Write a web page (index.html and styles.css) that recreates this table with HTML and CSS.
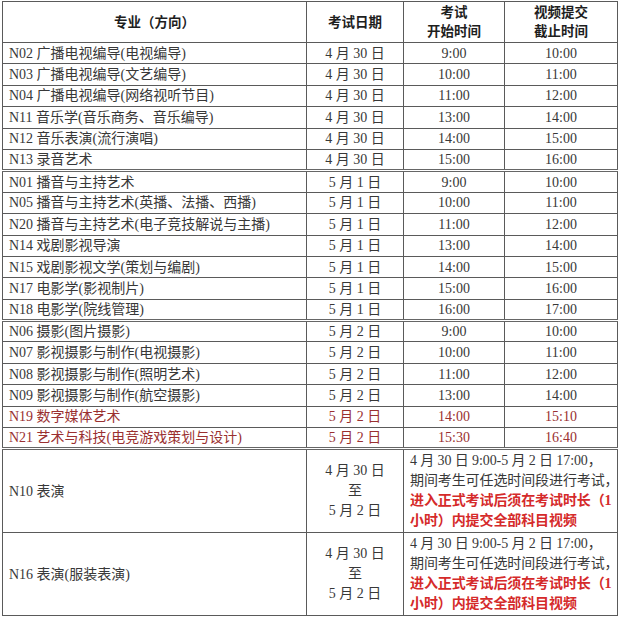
FILE: index.html
```html
<!DOCTYPE html>
<html lang="zh-CN">
<head>
<meta charset="utf-8">
<title>考试时间安排</title>
<link rel="stylesheet" href="styles.css">
</head>
<body>
<table class="sched">
  <colgroup>
    <col class="c-major">
    <col class="c-date">
    <col class="c-start">
    <col class="c-end">
  </colgroup>
  <thead>
    <tr class="head">
      <th>专业（方向）</th>
      <th>考试日期</th>
      <th>考试<br>开始时间</th>
      <th>视频提交<br>截止时间</th>
    </tr>
  </thead>
  <tbody>
    <tr><td class="major">N02 广播电视编导(电视编导)</td><td>4 月 30 日</td><td>9:00</td><td>10:00</td></tr>
    <tr><td class="major">N03 广播电视编导(文艺编导)</td><td>4 月 30 日</td><td>10:00</td><td>11:00</td></tr>
    <tr><td class="major">N04 广播电视编导(网络视听节目)</td><td>4 月 30 日</td><td>11:00</td><td>12:00</td></tr>
    <tr><td class="major">N11 音乐学(音乐商务、音乐编导)</td><td>4 月 30 日</td><td>13:00</td><td>14:00</td></tr>
    <tr><td class="major">N12 音乐表演(流行演唱)</td><td>4 月 30 日</td><td>14:00</td><td>15:00</td></tr>
    <tr><td class="major">N13 录音艺术</td><td>4 月 30 日</td><td>15:00</td><td>16:00</td></tr>

    <tr class="sep"><td class="major">N01 播音与主持艺术</td><td>5 月 1 日</td><td>9:00</td><td>10:00</td></tr>
    <tr><td class="major">N05 播音与主持艺术(英播、法播、西播)</td><td>5 月 1 日</td><td>10:00</td><td>11:00</td></tr>
    <tr><td class="major">N20 播音与主持艺术(电子竞技解说与主播)</td><td>5 月 1 日</td><td>11:00</td><td>12:00</td></tr>
    <tr><td class="major">N14 戏剧影视导演</td><td>5 月 1 日</td><td>13:00</td><td>14:00</td></tr>
    <tr><td class="major">N15 戏剧影视文学(策划与编剧)</td><td>5 月 1 日</td><td>14:00</td><td>15:00</td></tr>
    <tr><td class="major">N17 电影学(影视制片)</td><td>5 月 1 日</td><td>15:00</td><td>16:00</td></tr>
    <tr><td class="major">N18 电影学(院线管理)</td><td>5 月 1 日</td><td>16:00</td><td>17:00</td></tr>

    <tr class="sep"><td class="major">N06 摄影(图片摄影)</td><td>5 月 2 日</td><td>9:00</td><td>10:00</td></tr>
    <tr><td class="major">N07 影视摄影与制作(电视摄影)</td><td>5 月 2 日</td><td>10:00</td><td>11:00</td></tr>
    <tr><td class="major">N08 影视摄影与制作(照明艺术)</td><td>5 月 2 日</td><td>11:00</td><td>12:00</td></tr>
    <tr><td class="major">N09 影视摄影与制作(航空摄影)</td><td>5 月 2 日</td><td>13:00</td><td>14:00</td></tr>
    <tr class="red"><td class="major">N19 数字媒体艺术</td><td>5 月 2 日</td><td>14:00</td><td>15:10</td></tr>
    <tr class="red"><td class="major">N21 艺术与科技(电竞游戏策划与设计)</td><td>5 月 2 日</td><td>15:30</td><td>16:40</td></tr>

    <tr class="sep tall">
      <td class="major">N10 表演</td>
      <td class="range">4 月 30 日<br>至<br>5 月 2 日</td>
      <td class="note" colspan="2">4 月 30 日 9:00-5 月 2 日 17:00，<br>期间考生可任选时间段进行考试，<br><strong>进入正式考试后须在考试时长（1<br>小时）内提交全部科目视频</strong></td>
    </tr>
    <tr class="tall">
      <td class="major">N16 表演(服装表演)</td>
      <td class="range">4 月 30 日<br>至<br>5 月 2 日</td>
      <td class="note" colspan="2">4 月 30 日 9:00-5 月 2 日 17:00，<br>期间考生可任选时间段进行考试，<br><strong>进入正式考试后须在考试时长（1<br>小时）内提交全部科目视频</strong></td>
    </tr>
  </tbody>
</table>
</body>
</html>
```
FILE: styles.css
```css
html, body {
  margin: 0;
  padding: 0;
  background: #ffffff;
}

body {
  padding: 1px 0 0 2px;
  font-family: "Liberation Serif", "Noto Sans CJK SC", serif;
  font-size: 14px;
  color: #383838;
}

.sched {
  border-collapse: collapse;
  table-layout: fixed;
  width: 615px;
}

.c-major { width: 304px; }
.c-date { width: 97px; }
.c-start { width: 101px; }
.c-end { width: 113px; }

.sched th,
.sched td {
  border: 1px solid #5a5a5a;
  padding: 0;
  text-align: center;
  vertical-align: middle;
  white-space: nowrap;
  line-height: 19px;
}

.sched th {
  font-weight: bold;
  color: #1e1e1e;
  font-size: 13.5px;
}

.head { height: 41px; }

.sched tbody tr { height: 21.4px; }

.sched td.major {
  text-align: left;
  padding-left: 6px;
}

.sep td {
  border-top: 3px double #666;
}

.red td {
  color: #9a3030;
}

.sched tr.tall { height: 83.5px; }

.sched td.range {
  line-height: 20px;
}

.sched td.note {
  text-align: left;
  padding-left: 6px;
  line-height: 20px;
  letter-spacing: -0.1px;
}

.note strong {
  color: #d52a2a;
  font-weight: bold;
}
```
